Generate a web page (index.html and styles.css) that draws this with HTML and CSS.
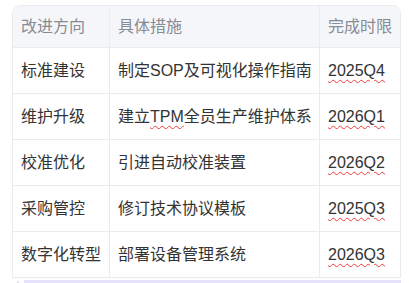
FILE: index.html
```html
<!DOCTYPE html>
<html lang="zh">
<head>
<meta charset="utf-8">
<link rel="stylesheet" href="styles.css">
</head>
<body>
<div class="wrap">
  <table class="plan">
    <thead>
      <tr><th class="c1">改进方向</th><th class="c2">具体措施</th><th class="c3">完成时限</th></tr>
    </thead>
    <tbody>
      <tr><td>标准建设</td><td>制定SOP及可视化操作指南</td><td><span class="sp">2025Q4</span></td></tr>
      <tr><td>维护升级</td><td>建立<span class="sp">TPM</span>全员生产维护体系</td><td><span class="sp">2026Q1</span></td></tr>
      <tr><td>校准优化</td><td>引进自动校准装置</td><td><span class="sp">2026Q2</span></td></tr>
      <tr><td>采购管控</td><td>修订技术协议模板</td><td><span class="sp">2025Q3</span></td></tr>
      <tr><td>数字化转型</td><td>部署设备管理系统</td><td><span class="sp">2026Q3</span></td></tr>
    </tbody>
  </table>
  <div class="bar"><span class="dot"></span><span class="track"></span></div>
</div>
</body>
</html>
```
FILE: styles.css
```css
html, body { margin: 0; padding: 0; background: #fff; }
body {
  font-family: "Liberation Sans", "Noto Sans CJK SC", sans-serif;
  font-size: 16px;
  color: #333;
}
.wrap { padding: 5px 8px 0 12px; }
.plan {
  width: 389px;
  border-collapse: separate;
  border-spacing: 0;
  border: 1px solid #ebebef;
  border-radius: 8px 8px 0 0;
  overflow: hidden;
  table-layout: fixed;
}
.plan th, .plan td {
  text-align: left;
  font-weight: normal;
  padding: 0 8px;
  line-height: 24px;
  white-space: nowrap;
  border-right: 1px solid #ebebef;
  border-bottom: 1px solid #ebebef;
}
.plan th:last-child, .plan td:last-child { border-right: none; }
.plan tbody tr:last-child td { border-bottom: none; }
.plan th {
  background: #f5f6f9;
  color: #878b94;
  height: 41px;
  padding-top: 0;
  padding-bottom: 0;
}
.plan td { height: 45px; }
.c1 { width: 80px; }
.c2 { width: 193px; }
.c3 { width: 64px; }
.sp {
  text-decoration: underline wavy #f03c3c;
  text-decoration-thickness: 1px;
  text-underline-offset: 3px;
}
.bar { display: flex; align-items: center; gap: 5px; margin-top: 2px; }
.dot { width: 2px; height: 2px; background: #e4e0fb; margin-left: 5px; }
.track { flex: 1; height: 4px; background: #e6e2fb; }
```
